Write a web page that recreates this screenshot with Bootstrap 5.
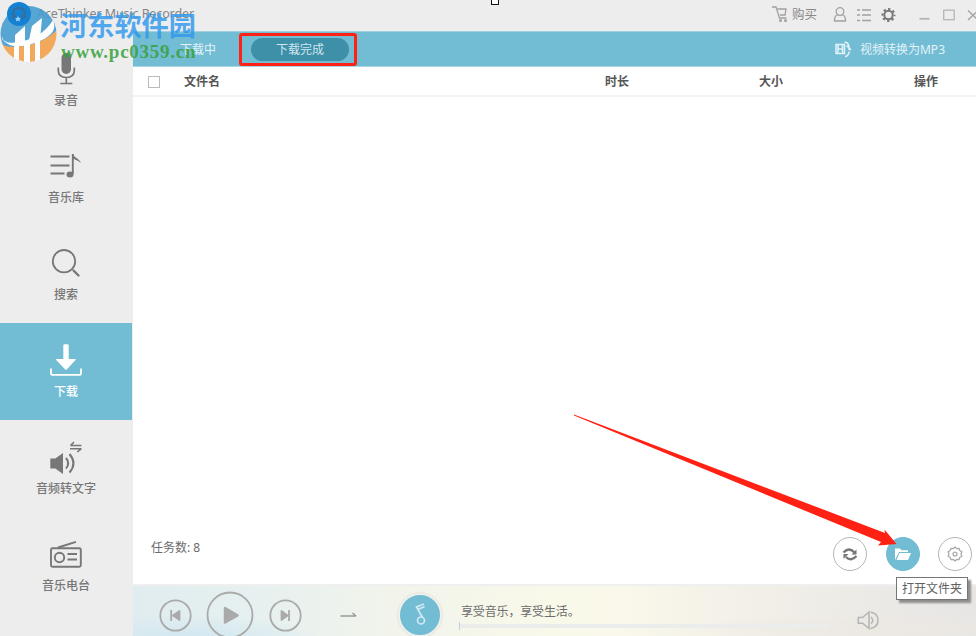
<!DOCTYPE html>
<html lang="zh-CN">
<head>
<meta charset="utf-8">
<meta name="viewport" content="width=device-width, initial-scale=1">
<title>AceThinker Music Recorder</title>
<link rel="stylesheet" href="https://cdn.jsdelivr.net/npm/bootstrap@5.3.0/dist/css/bootstrap.min.css">
<style>
body{font-family:"Noto Sans","Noto Sans CJK SC",sans-serif;font-size:12px;line-height:16px;color:#6c6c6c;background:#ededed}
svg{display:block;flex:none}
.app{width:976px;height:636px}
.titlebar{height:31px;padding-left:37px;color:#8b8b8b}
.app-title{font-size:12.5px;color:#858585;letter-spacing:-.1px;padding-bottom:3px}
.sidebar{width:133px;padding:1px 1px 0 0}
.side-item{height:97px;padding-top:20px;color:#777;font-weight:500}
.side-item span{margin-top:7px}
.side-item.current{background:#72bcd4;color:#fff}
.tabs{height:36px;padding-top:1px;background:#72bcd4;border-top:1px solid #a3d0df;border-bottom:1px solid #a9d6e4;color:#e4f3f8}
.tab-idle{width:106px;padding-left:47px}
.tab-active{width:98px;height:23px;margin-left:12px;background:#3e8fa8;color:#cfe6ee}
.thead-row{height:30px;padding-top:1px;border-bottom:2px solid #f3f3f3;color:#555;font-weight:600}
.checkbox-sq{width:12px;height:12px;border:1px solid #bbb;margin-left:15px;margin-right:24px}
.status{height:63px;padding:2px 4px 0 18px}
.task-count{padding-top:17px}
.round-btn{width:34px;height:34px;border:1.6px solid #b4b4b4;background:#fff}
.round-btn.filled{background:#72bcd4;border-color:#72bcd4}
.player{height:52px;border-top:2px solid #efefef;overflow:hidden;
background:radial-gradient(ellipse 130px 24px at 7% 106%,#d0e7f2 0,transparent 100%),radial-gradient(ellipse 200px 16px at 90% 85%,#ece8e2 0,transparent 100%),linear-gradient(90deg,#e0ecef 0,#e6f0f0 14%,#f2f4eb 31%,#f9f9ea 50%,#f9f8ea 58%,#f3f0e8 72%,#ebe9e6 90%,#e7e6e5 100%)}
.disc{width:44px;height:44px;background:#72bcd4;border:2px solid #f0f1ea;box-shadow:0 0 2px #ccc}
.seek{width:370px;height:4px;background:#ebecec}
.seek-cap{border-left:1px solid #bed0e5;height:8px}
.overlay{left:0;top:0;pointer-events:none}
.redbox{left:239px;top:33px;width:118px;height:33px;border:3px solid #ff2113;border-radius:3px}
.tip{left:896px;top:577px;width:72px;height:23px;border:1px solid #767676;background:#fff;color:#606060;box-shadow:3px 3px 2px #8d8d8d}
.handle{left:491px;top:-3px;width:8px;height:8px;border:1px solid #111;background:#fff}
.wm-name{left:60px;top:5px;font:700 27.2px/38px "Noto Sans CJK SC",sans-serif;color:#3299ed;opacity:.83}
.wm-url{left:61px;top:40px;font:700 19px/24px "Liberation Serif",serif;color:#37a13c;opacity:.85;letter-spacing:.75px}
</style>
<script src="https://cdn.jsdelivr.net/npm/bootstrap@5.3.0/dist/js/bootstrap.bundle.min.js"></script>
</head>
<body>
<div class="app position-relative overflow-hidden d-flex flex-column">
  <header class="titlebar d-flex align-items-center">
    <span class="app-title text-nowrap">AceThinker Music Recorder</span>
    <svg class="ms-auto" width="204" height="31" viewBox="772 0 204 31" fill="none" stroke="#a0a0a0" stroke-width="1.3">
      <path d="M772 7h4l3.500 11h7M777.500 9h8.500l-1 6h-5"/><circle cx="780.500" cy="20.500" r=".9"/><circle cx="785.500" cy="20.500" r=".9"/>
      <text x="792" y="18.500" font-size="12.500" fill="#888" stroke="none">购买</text>
      <circle cx="840" cy="11.500" r="3.800"/><path d="M838 14.500c-3 1-3.700 3-3.500 6.500h11c.2-3.500-.5-5.500-3.500-6.500"/>
      <path d="M857 10h3m2 0h9M857 15h3m2 0h9M857 20.500h3m2 0h9"/>
      <g stroke="#777"><circle cx="888.500" cy="15" r="4.200" stroke-width="2"/><circle cx="888.500" cy="15" r="6" stroke-width="2" stroke-dasharray="2.300 2.410" stroke-dashoffset="1.150"/></g>
      <path d="M919.500 18.800h10" stroke-width="1.800" stroke="#b5b5b5"/><rect x="943.700" y="10.200" width="10.500" height="9.500" stroke="#b5b5b5"/><path d="M968 10.500l10 9.500m0-9.500l-10 9.500"/>
    </svg>
  </header>

  <div class="d-flex flex-grow-1">
    <nav class="sidebar flex-shrink-0">
      <div class="side-item d-flex flex-column align-items-center">
        <svg width="34" height="34" fill="none" stroke="#777" stroke-width="1.700"><rect x="12.500" y="1" width="9.500" height="21" rx="4.700" fill="#777" stroke="none"/><path d="M9.300 15.500v3c0 4.500 3 7 8 7s8-2.500 8-7v-3M17.300 25.500v6M11.300 31.500h12"/></svg>
        <span>录音</span>
      </div>
      <div class="side-item d-flex flex-column align-items-center">
        <svg width="34" height="34" fill="none" stroke="#777" stroke-width="1.900"><path d="M1.500 7.500h19M1.500 16.500h19M1.500 24.500h14"/><path d="M23.800 5v20" stroke-width="1.900"/><path d="M23.500 5c1 3.500 6 4 8 8.500-3-2.500-5-3-7.500-4z" fill="#777" stroke-width=".4"/><ellipse cx="21" cy="25.600" rx="3.500" ry="3" fill="#777" stroke="none"/></svg>
        <span>音乐库</span>
      </div>
      <div class="side-item d-flex flex-column align-items-center">
        <svg width="34" height="34" fill="none" stroke="#777" stroke-width="1.800"><circle cx="15" cy="15.200" r="11.200"/><path d="M24.500 24.500l5 5" stroke-width="2.400" stroke-linecap="round"/></svg>
        <span>搜索</span>
      </div>
      <div class="side-item current d-flex flex-column align-items-center">
        <svg width="34" height="34"><path d="M14.300 2.500q0-1.200 1.200-1.200h3q1.200 0 1.200 1.200v13.500h6.300q1.500 0 .5 1l-8.500 9.200q-1 1-2 0L7.200 17q-1-1 .5-1h6.600z" fill="#fff"/><path d="M2 25.500v5q0 1.300 1.300 1.300h27.400q1.300 0 1.300-1.300v-5" fill="none" stroke="#fff" stroke-width="1.800"/></svg>
        <span>下载</span>
      </div>
      <div class="side-item d-flex flex-column align-items-center">
        <svg width="34" height="34" fill="none" stroke="#777"><path d="M1.300 18.500h5L14 13v21l-7.700-5.500h-5z" fill="#777" stroke="none"/><path d="M17 18q4.500 5.500 0 10.500M20.500 14q8 9.500 0 18.500" stroke-width="2"/><path d="M21.500 5.500h11m-11 0 3.500-3.500M21 8.800h11.500m-.3 0-4 3.200" stroke-width="1.600"/></svg>
        <span>音频转文字</span>
      </div>
      <div class="side-item d-flex flex-column align-items-center">
        <svg width="34" height="34" fill="none" stroke="#777" stroke-width="1.900"><rect x="2" y="11.200" width="29.800" height="18.600" rx="1.500"/><path d="M9 10.500 27 4.800M18.500 17H28M18.500 22.500H28"/><circle cx="10.500" cy="20.500" r="4.700"/></svg>
        <span>音乐电台</span>
      </div>
    </nav>

    <main class="flex-grow-1 d-flex flex-column bg-white">
      <div class="tabs d-flex align-items-center">
        <span class="tab-idle text-nowrap">下载中</span>
        <span class="tab-active rounded-pill d-flex align-items-center justify-content-center">下载完成</span>
        <svg class="ms-auto" width="17" height="17" viewBox="0 0 17 17" fill="none" stroke="#e4f3f8" stroke-width="1.500"><path d="M1 3.500h8.500v9H1zM3 3.500v9M7.500 3.500v9M3.500 8h4"/><path d="M9.500 1.200q4 0 4.500 4.500M14 5v4M11.500 4.500l4.500 4.500M10 15.500q3 0 4.500-5" /></svg>
        <span style="margin:0 31px 0 8px">视频转换为MP3</span>
      </div>
      <div class="thead-row d-flex align-items-center">
        <span class="checkbox-sq"></span>
        <span style="width:421px">文件名</span><span style="width:154px">时长</span><span style="width:155px">大小</span><span>操作</span>
      </div>
      <div class="flex-grow-1"></div>
      <div class="status d-flex align-items-center">
        <span class="mb-auto task-count">任务数: 8</span>
        <div class="ms-auto d-flex" style="gap:18.500px">
          <span class="round-btn rounded-circle d-flex align-items-center justify-content-center"><svg width="18" height="18" fill="none" stroke="#777" stroke-width="2.300"><path d="M2.500 7.500q5.500-6 11 0" /><path d="M15.500 4.500v5h-5z" fill="#777" stroke="none"/><path d="M15.500 11q-5.500 6-10.500 1"/><path d="M2.500 14v-5h5z" fill="#777" stroke="none"/></svg></span>
          <span class="round-btn filled rounded-circle d-flex align-items-center justify-content-center"><svg width="18" height="16"><path d="M1 14V2.500h5l1.500 1.800H14V6H5z" fill="#fff"/><path d="M5.500 7H17l-3 7H2.500z" fill="#fff"/></svg></span>
          <span class="round-btn rounded-circle d-flex align-items-center justify-content-center"><svg width="16" height="16" viewBox="0 0 18 18" fill="none" stroke="#aaa" stroke-width="1.500"><path d="M9 1.200l1.800 1.700 2.700-.3.800 2.400 2.400 1.500-.9 2.500.9 2.500-2.400 1.500-.8 2.400-2.700-.3L9 16.800l-1.800-1.700-2.700.3-.8-2.400-2.400-1.500.9-2.500-.9-2.500L3.700 5l.8-2.400 2.700.3z" stroke-linejoin="round"/><circle cx="9" cy="9" r="2.200"/></svg></span>
        </div>
      </div>
      <footer class="player d-flex">
        <svg width="230" height="50" viewBox="133 586 230 50" fill="none" stroke="#aaa" stroke-width="1.800">
          <circle cx="175.500" cy="615.500" r="15.200"/><path d="M171.200 610v11"/><path d="M179.500 611v9l-6.500-4.500z" fill="#aaa" stroke-linejoin="round"/>
          <circle cx="230" cy="615" r="22.500"/><path d="M225 608v14.500l12.500-7.200z" fill="#aaa" stroke-linejoin="round" stroke-width="2.500"/>
          <circle cx="285.500" cy="615.500" r="15.200"/><path d="M289 610v11"/><path d="M281.500 611v9l6-4.500z" fill="#aaa" stroke-linejoin="round"/>
          <path d="M340.500 616h15.500m0 0-3.500-3" stroke="#999" stroke-width="1.400"/>
        </svg>
        <span class="disc rounded-circle d-flex align-items-center justify-content-center flex-shrink-0" style="margin:7px 0 0 35px">
          <svg width="16" height="24" fill="none" stroke="#d1eaf2" stroke-width="1.700"><circle cx="9" cy="17.500" r="3.500"/><path d="M10.500 14.500 4.500 4l7.500-3M5.500 6.500l7-2.800"/></svg>
        </span>
        <div style="padding:18px 0 0 18px">
          <div class="text-nowrap" style="padding-left:1px;letter-spacing:-.15px">享受音乐，享受生活。</div>
          <div class="seek-cap d-flex align-items-center" style="margin:2px 0 0 -1px"><div class="seek"></div></div>
        </div>
        <svg class="ms-auto" width="22" height="22" style="margin:24px 97px 0 0" fill="none" stroke="#b4b4b4" stroke-width="1.500"><path d="M1.300 7.500h4.200L12 2v16.500l-6.500-5.300H1.300zM14 7q3.500 3.500 0 6.500M13.500 2q7.500 1.500 7.500 8.300t-7.500 8.200"/></svg>
      </footer>
    </main>
  </div>

  <!-- Site logo laid over the title bar -->
  <svg class="position-absolute overlay" width="60" height="66">
    <defs><clipPath id="globe"><circle cx="28.500" cy="34" r="28"/></clipPath></defs>
    <g clip-path="url(#globe)" opacity=".9"><path d="M0 5h57v57H0z" fill="#469dd0"/><path d="M0 43q7 6 23 3 21-3 34-16v36H0z" fill="#f3a14c"/>
    <path d="M2 37q2 8 17 5Q42 38 53 20q6 14-16 22Q12 52 2 39z" fill="#fff"/>
    <path d="M15 35l10-9v19h-10zM29 40l3-14 10-8-2 22zM14 45h5v19h-5zM24 44h6v21h-6zM35 41h5v25h-5z" fill="#fff"/></g>
    <circle cx="19" cy="14" r="12" fill="#1581d2"/><path d="M13 18v-4q0-6 6-6t6 6v4M14.500 14v5m8-5v5" fill="none" stroke="#366d9a" stroke-width="2"/><path d="M18 16l1 2 2 .2-1.500 1.300.5 2-2-1-2 1 .4-2-1.400-1.300 2-.2z" fill="#9bd4f4"/>
  </svg>
  <div class="position-absolute wm-name text-nowrap">河东软件园</div>
  <div class="position-absolute wm-url text-nowrap">www.pc0359.cn</div>

  <!-- Annotations and tooltip -->
  <div class="position-absolute handle"></div>
  <div class="position-absolute redbox"></div>
  <svg class="position-absolute overlay" width="976" height="636"><path d="M574 414.500 885 533l-.5-3.500L896.500 544l-18.500 1.500 3-3.500L574 415.500z" fill="#ff2113"/></svg>
  <div class="position-absolute tip d-flex align-items-center justify-content-center text-nowrap">打开文件夹</div>
</div>
</body>
</html>
